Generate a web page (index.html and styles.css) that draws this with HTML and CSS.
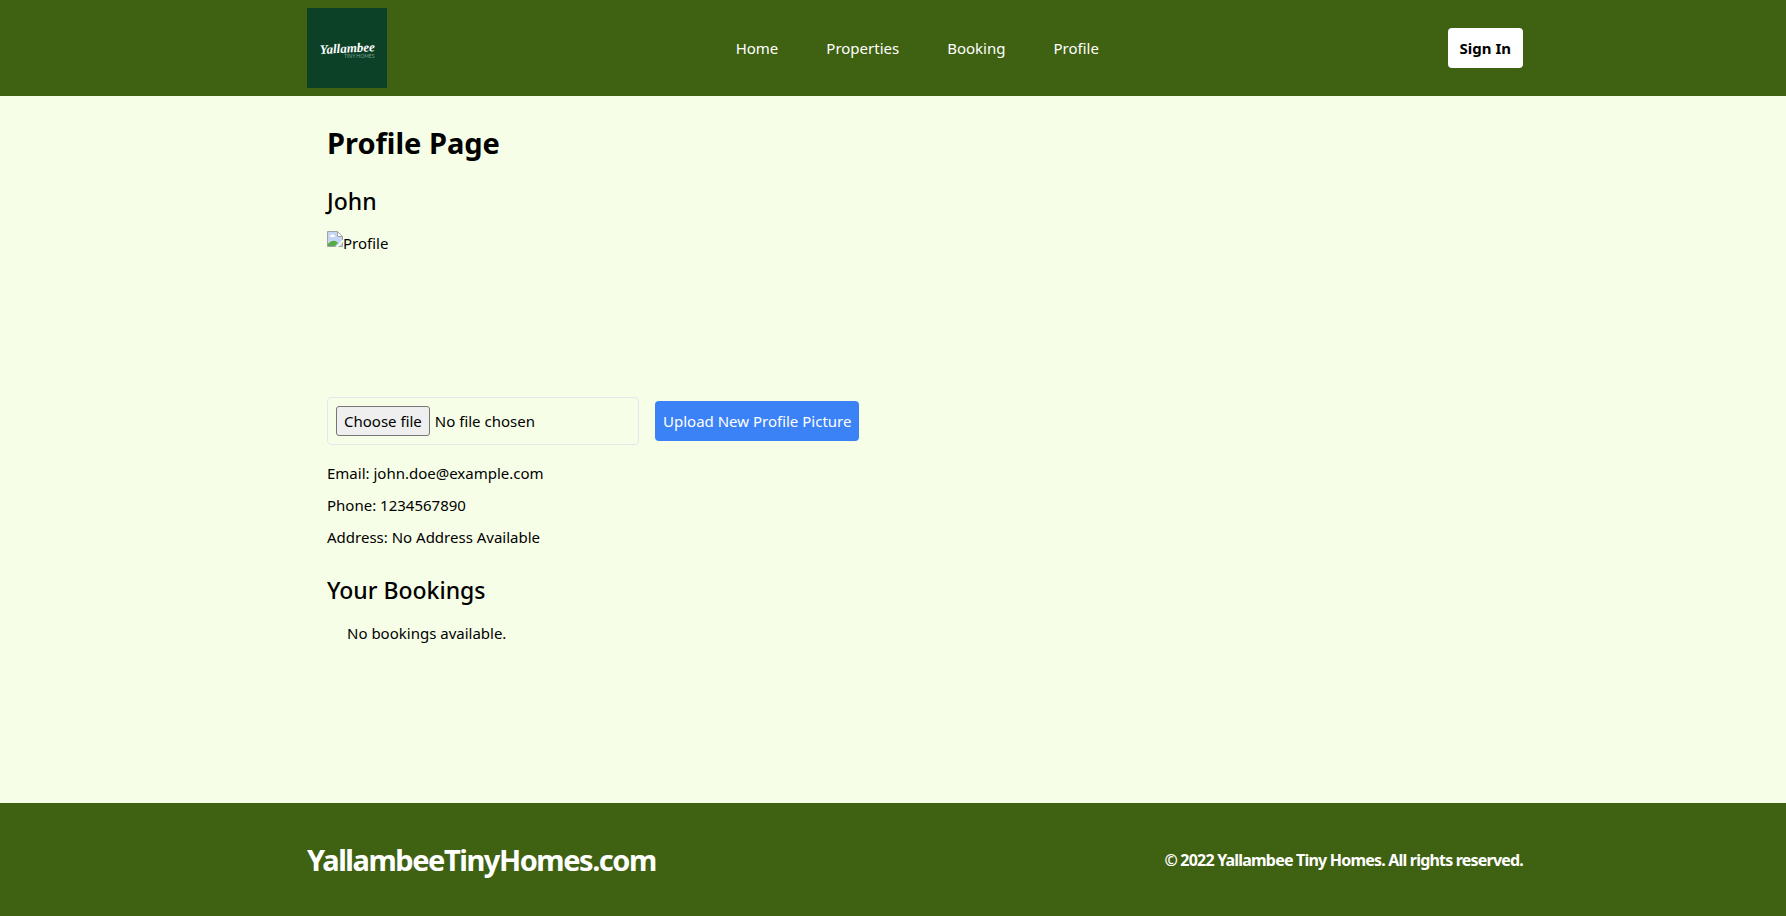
FILE: index.html
```html
<!DOCTYPE html>
<html lang="en">
<head>
<meta charset="utf-8">
<meta name="viewport" content="width=device-width, initial-scale=1">
<title>Profile Page</title>
<link rel="stylesheet" href="styles.css">
</head>
<body>
<header class="header">
  <div class="container header-row">
    <a class="logo" href="#">
      <svg class="logo-mark" viewBox="0 0 80 80" role="img" aria-label="Yallambee Tiny Homes">
        <rect width="80" height="80" fill="#0c4128"/>
        <text class="logo-script" x="13" y="46" transform="rotate(-3 13 46)">Yallambee</text>
        <text class="logo-sub" x="37" y="50">TINY HOMES</text>
      </svg>
    </a>
    <nav class="nav">
      <a href="#">Home</a>
      <a href="#">Properties</a>
      <a href="#">Booking</a>
      <a href="#">Profile</a>
    </nav>
    <button class="sign-in" type="button">Sign In</button>
  </div>
</header>
<main class="main">
  <div class="container">
    <div class="profile">
      <h1 class="title">Profile Page</h1>
      <h2 class="subtitle">John</h2>
      <div class="picture">
        <svg class="picture-icon" viewBox="0 0 16 16" aria-hidden="true">
          <path d="M0.500 0.500H10.500L15.500 5.500V15.500H0.500Z" fill="#c3d6f5" stroke="#a3a3a3"/>
          <path d="M10.500 0.500V5.500H15.500Z" fill="#fff" stroke="#a3a3a3"/>
          <path d="M3 6a1.500 1.500 0 0 1 1-2a2 2 0 0 1 3.500 0.500a1 1 0 0 1 0.500 1.500Z" fill="#fff"/>
          <path d="M1 15v-2c2-3 6-4.500 9-2l1 1l-3 3Z" fill="#57a942"/>
          <path d="M8.500 16L16 8.500V11L11 16Z" fill="#f7fee7"/>
        </svg>
        <span>Profile</span>
      </div>
      <form class="upload">
        <label class="file">
          <input class="file-input" type="file">
          <span class="file-button">Choose file</span>
          <span>No file chosen</span>
        </label>
        <button class="upload-button" type="button">Upload New Profile Picture</button>
      </form>
      <div class="details">
        <p>Email: john.doe@example.com</p>
        <p>Phone: 1234567890</p>
        <p>Address: No Address Available</p>
      </div>
      <h2 class="subtitle">Your Bookings</h2>
      <p class="empty">No bookings available.</p>
    </div>
  </div>
</main>
<footer class="footer">
  <div class="container footer-row">
    <p class="site">YallambeeTinyHomes.com</p>
    <p class="copyright">© 2022 Yallambee Tiny Homes. All rights reserved.</p>
  </div>
</footer>
</body>
</html>
```
FILE: styles.css
```css
*, *::before, *::after { box-sizing: border-box; }
body {
  margin: 0;
  min-height: 100vh;
  display: flex;
  flex-direction: column;
  background: #f7fee7;
  color: #000;
  font-family: "Segoe UI", "Noto Sans", "Open Sans", sans-serif;
  font-size: 15px;
  line-height: 24px;
}
h1, h2, p { margin: 0; }
button { font: inherit; border: 0; cursor: pointer; }
.container {
  width: 100%;
  max-width: 1260px;
  margin: 0 auto;
  padding-left: 44px;
}
.header { background: #3f6212; padding: 8px 0; }
.header-row, .footer-row {
  display: flex;
  align-items: center;
  justify-content: space-between;
}
.logo, .logo-mark { display: block; width: 80px; height: 80px; }
.logo-script {
  fill: #fff;
  font-family: "Liberation Serif", serif;
  font-size: 13px;
  font-style: italic;
  font-weight: 700;
}
.logo-sub {
  fill: #7fa08e;
  font-family: Lato, sans-serif;
  font-size: 5px;
}
.nav { display: flex; gap: 48px; }
.nav a { color: #fff; text-decoration: none; }
.sign-in {
  padding: 8px 12px;
  border-radius: 4px;
  background: #fff;
  color: #000;
  font-weight: 700;
}
.main { flex: 1; }
.profile { padding: 28px 20px; }
.title { font-size: 29px; line-height: 38px; font-weight: 700; }
.subtitle { margin-top: 23px; font-size: 23px; line-height: 32px; font-weight: 500; }
.picture { display: flex; height: 150px; margin-top: 14px; }
.picture-icon { width: 16px; height: 16px; }
.upload { display: flex; align-items: center; gap: 16px; margin-top: 16px; }
.file {
  position: relative;
  display: flex;
  align-items: center;
  gap: 5px;
  width: 312px;
  padding: 8px;
  border: 1px solid #e5e7eb;
  border-radius: 4px;
}
.file-input { position: absolute; inset: 0; width: 100%; opacity: 0; cursor: pointer; }
.file-button {
  padding: 2px 7px;
  border: 1px solid #767676;
  border-radius: 3px;
  background: #efefef;
}
.upload-button { padding: 8px; border-radius: 4px; background: #3b82f6; color: #fff; }
.details { display: grid; gap: 8px; margin: 16px 0 25px; }
.details + .subtitle { margin-top: 0; }
.empty { margin-top: 15px; padding-left: 20px; }
.footer { background: #3f6212; color: #fff; padding: 36px 0; }
.site { font-size: 29px; line-height: 41px; font-weight: 700; letter-spacing: -0.05em; }
.copyright { font-size: 16px; font-weight: 700; letter-spacing: -0.05em; }
```
